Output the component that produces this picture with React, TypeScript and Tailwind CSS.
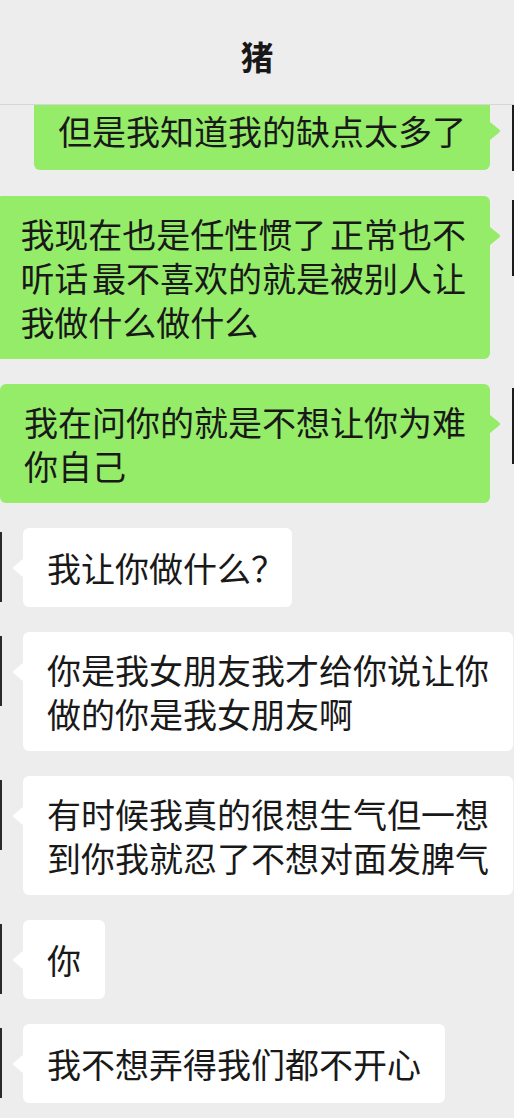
import React from 'react'

type Message = {
  id: number
  mine: boolean
  lines: React.ReactNode[]
}

const messages: Message[] = [
  { id: 1, mine: true, lines: ['但是我知道我的缺点太多了'] },
  {
    id: 2,
    mine: true,
    lines: ['我现在也是任性惯了 正常也不', '听话 最不喜欢的就是被别人让', '我做什么做什么'],
  },
  { id: 3, mine: true, lines: ['我在问你的就是不想让你为难', '你自己'] },
  {
    id: 4,
    mine: false,
    lines: [<>我让你做什么<span className="[font-feature-settings:'palt']">？</span></>],
  },
  { id: 5, mine: false, lines: ['你是我女朋友我才给你说让你', '做的你是我女朋友啊'] },
  { id: 6, mine: false, lines: ['有时候我真的很想生气但一想', '到你我就忍了不想对面发脾气'] },
  { id: 7, mine: false, lines: ['你'] },
  { id: 8, mine: false, lines: ['我不想弄得我们都不开心'] },
]

function Tail({ mine }: { mine: boolean }) {
  // little arrow pointing to the avatar
  if (mine) {
    return (
      <svg className="absolute top-[31px] -right-[11px]" width="11" height="18" viewBox="0 0 11 18">
        <path d="M0 0 L9.5 7.8 Q11 9 9.5 10.2 L0 18 Z" fill="#95ec69" />
      </svg>
    )
  }
  return (
    <svg className="absolute top-[31px] -left-[11px]" width="11" height="18" viewBox="0 0 11 18">
      <path d="M11 0 L1.5 7.8 Q0 9 1.5 10.2 L11 18 Z" fill="#ffffff" />
    </svg>
  )
}

function Bubble({ msg }: { msg: Message }) {
  return (
    <div
      className={`relative flex items-center min-h-[79px] rounded-[6px] px-6 py-[15.5px] text-[34px] leading-[44px] text-[#191919] whitespace-nowrap [word-spacing:-4px] ${
        msg.mine ? 'bg-[#95ec69]' : 'bg-white'
      }`}
    >
      <Tail mine={msg.mine} />
      <div>
        {msg.lines.map((line, i) => (
          <div key={i}>{line}</div>
        ))}
      </div>
    </div>
  )
}

export default function App() {
  return (
    <div
      className="h-[1118px] w-[514px] overflow-hidden bg-[#ededed] flex flex-col"
      style={{ fontFamily: '"Noto Sans CJK SC", "Noto Sans", sans-serif' }}
    >
      {/* Header */}
      <div className="relative z-10 h-[105px] shrink-0 bg-[#ededed] border-b border-[#d6d6d6] flex justify-center pt-[36px]">
        <h1 className="text-[33px] leading-[40px] font-semibold text-[#181818]">猪</h1>
      </div>

      {/* Chat */}
      <div className="-mt-[14px] flex flex-col gap-[25px]">
        {messages.map((msg) =>
          msg.mine ? (
            <div key={msg.id} className="flex items-start justify-end gap-[22px]">
              <Bubble msg={msg} />
              <div className="mt-[4px] h-[76px] w-[2px] shrink-0 bg-[#1c1c1c]" />
            </div>
          ) : (
            <div key={msg.id} className="flex items-start gap-[21px]">
              <div className="mt-[4px] h-[70px] w-[2px] shrink-0 bg-[#2a2a2a]" />
              <Bubble msg={msg} />
            </div>
          )
        )}
      </div>
    </div>
  )
}
